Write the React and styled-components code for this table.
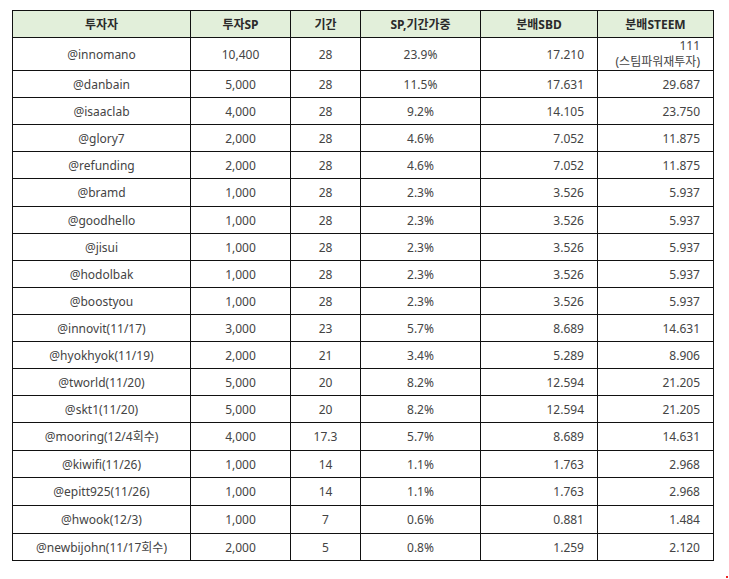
import React from "react";
import styled, { createGlobalStyle } from "styled-components";

const GlobalStyle = createGlobalStyle`
  body {
    margin: 0;
    background: #ffffff;
    font-family: "Noto Sans", "Noto Sans CJK KR", sans-serif;
  }
`;

const rows = [
  ["@innomano", "10,400", "28", "23.9%", "17.210", "111", "(스팀파워재투자)"],
  ["@danbain", "5,000", "28", "11.5%", "17.631", "29.687"],
  ["@isaaclab", "4,000", "28", "9.2%", "14.105", "23.750"],
  ["@glory7", "2,000", "28", "4.6%", "7.052", "11.875"],
  ["@refunding", "2,000", "28", "4.6%", "7.052", "11.875"],
  ["@bramd", "1,000", "28", "2.3%", "3.526", "5.937"],
  ["@goodhello", "1,000", "28", "2.3%", "3.526", "5.937"],
  ["@jisui", "1,000", "28", "2.3%", "3.526", "5.937"],
  ["@hodolbak", "1,000", "28", "2.3%", "3.526", "5.937"],
  ["@boostyou", "1,000", "28", "2.3%", "3.526", "5.937"],
  ["@innovit(11/17)", "3,000", "23", "5.7%", "8.689", "14.631"],
  ["@hyokhyok(11/19)", "2,000", "21", "3.4%", "5.289", "8.906"],
  ["@tworld(11/20)", "5,000", "20", "8.2%", "12.594", "21.205"],
  ["@skt1(11/20)", "5,000", "20", "8.2%", "12.594", "21.205"],
  ["@mooring(12/4회수)", "4,000", "17.3", "5.7%", "8.689", "14.631"],
  ["@kiwifi(11/26)", "1,000", "14", "1.1%", "1.763", "2.968"],
  ["@epitt925(11/26)", "1,000", "14", "1.1%", "1.763", "2.968"],
  ["@hwook(12/3)", "1,000", "7", "0.6%", "0.881", "1.484"],
  ["@newbijohn(11/17회수)", "2,000", "5", "0.8%", "1.259", "2.120"],
];

const headers = ["투자자", "투자SP", "기간", "SP,기간가중", "분배SBD", "분배STEEM"];
const widths = [178, 100, 70, 120, 117, 116];
// a few rows in the sheet are one pixel taller
const tallRows = [5, 14, 16, 17];

function App() {
  return (
    <Page>
      <GlobalStyle />
      <Table>
        <colgroup>
          {widths.map((w, i) => (
            <col key={i} style={{ width: w }} />
          ))}
        </colgroup>
        <thead>
          <Row h={27}>
            {headers.map(h => (
              <Head key={h}>{h}</Head>
            ))}
          </Row>
        </thead>
        <tbody>
          {rows.map((r, idx) => (
            <Row key={r[0]} h={idx === 0 ? 33 : tallRows.includes(idx) ? 28 : 27}>
              <Cell>{r[0]}</Cell>
              <Cell>{r[1]}</Cell>
              <Cell>{r[2]}</Cell>
              <Cell>{r[3]}</Cell>
              <Cell right>{r[4]}</Cell>
              <Cell right>
                {r[6] ? (
                  <>
                    <Line>{r[5]}</Line>
                    <Line>{r[6]}</Line>
                  </>
                ) : (
                  r[5]
                )}
              </Cell>
            </Row>
          ))}
        </tbody>
      </Table>
      <Dot />
    </Page>
  );
}

const Page = styled.div`
  position: relative;
  width: 729px;
  height: 579px;
  padding: 10px 0 0 12px;
  box-sizing: border-box;
`;

const Table = styled.table`
  border-collapse: collapse;
  table-layout: fixed;
  width: 702px;
  font-size: 12px;
  color: #444;
`;

const Row = styled.tr`
  height: ${({ h }) => h}px;
`;

const Head = styled.th`
  background: #e2efda;
  border: 1px solid #111;
  font-weight: bold;
  color: #2a2a2a;
  text-align: center;
  padding: 0;
`;

const Cell = styled.td`
  border: 1px solid #111;
  padding: 0 ${({ right }) => (right ? "13px" : "0")} 0 0;
  text-align: ${({ right }) => (right ? "right" : "center")};
  line-height: 15px;
  white-space: nowrap;
`;

const Line = styled.div`
  line-height: 16px;
  height: 16px;
`;

const Dot = styled.div`
  position: absolute;
  left: 726px;
  top: 576px;
  width: 2px;
  height: 2px;
  background: #e22;
`;

export default App;
